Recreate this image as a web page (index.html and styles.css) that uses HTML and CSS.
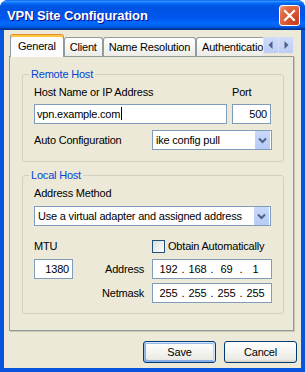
FILE: index.html
```html
<!DOCTYPE html>
<html lang="en">
<head>
    <meta charset="UTF-8">
    <title>VPN Site Configuration</title>
    <link rel="stylesheet" href="styles.css">
</head>
<body>
    <div class="window">
        <!-- Title Bar -->
        <div class="titlebar">
            <span class="title">VPN Site Configuration</span>
            <button class="close" aria-label="Close">
                <svg width="19" height="19" viewBox="0 0 19 19">
                    <path d="M5 5 L14 14 M14 5 L5 14" stroke="#ffffff" stroke-width="2.2" stroke-linecap="square" fill="none"/>
                </svg>
            </button>
        </div>

        <div class="client">
            <!-- Tabs -->
            <div class="tabbar">
                <div class="tabs">
                    <div class="tab active">General</div>
                    <div class="tab">Client</div>
                    <div class="tab">Name Resolution</div>
                    <div class="tab">Authentication</div>
                </div>
                <div class="tab-scroll">
                    <span class="arrow">
                        <svg width="14" height="16" viewBox="0 0 14 16"><polygon points="8.5,4 4.5,8 8.5,12" fill="#4d6185"/></svg>
                    </span>
                    <span class="arrow">
                        <svg width="14" height="16" viewBox="0 0 14 16"><polygon points="5.5,4 9.5,8 5.5,12" fill="#4d6185"/></svg>
                    </span>
                </div>
            </div>

            <!-- Tab Panel -->
            <div class="panel">
                <fieldset class="group">
                    <legend>Remote Host</legend>
                    <div class="remote-grid">
                        <span class="label">Host Name or IP Address</span>
                        <span class="label">Port</span>
                        <div class="field">vpn.example.com<span class="caret"></span></div>
                        <div class="field num">500</div>
                    </div>
                    <div class="row">
                        <span class="label">Auto Configuration</span>
                        <div class="combo short">
                            <span class="combo-text">ike config pull</span>
                            <span class="drop">
                                <svg width="15" height="18" viewBox="0 0 15 18"><polyline points="4,7.5 7.5,11 11,7.5" fill="none" stroke="#4d6185" stroke-width="2"/></svg>
                            </span>
                        </div>
                    </div>
                </fieldset>

                <fieldset class="group local">
                    <legend>Local Host</legend>
                    <span class="label">Address Method</span>
                    <div class="combo wide">
                        <span class="combo-text">Use a virtual adapter and assigned address</span>
                        <span class="drop">
                            <svg width="15" height="18" viewBox="0 0 15 18"><polyline points="4,7.5 7.5,11 11,7.5" fill="none" stroke="#4d6185" stroke-width="2"/></svg>
                        </span>
                    </div>
                    <div class="local-grid">
                        <span class="label">MTU</span>
                        <span></span>
                        <label class="check">
                            <span class="box"></span>
                            Obtain Automatically
                        </label>

                        <div class="field num">1380</div>
                        <span class="label right">Address</span>
                        <div class="field ip">
                            <span class="seg">192</span><span class="dot">.</span>
                            <span class="seg">168</span><span class="dot">.</span>
                            <span class="seg">69</span><span class="dot">.</span>
                            <span class="seg">1</span>
                        </div>

                        <span></span>
                        <span class="label right">Netmask</span>
                        <div class="field ip">
                            <span class="seg">255</span><span class="dot">.</span>
                            <span class="seg">255</span><span class="dot">.</span>
                            <span class="seg">255</span><span class="dot">.</span>
                            <span class="seg">255</span>
                        </div>
                    </div>
                </fieldset>
            </div>

            <!-- Dialog Buttons -->
            <div class="buttons">
                <button class="btn default">Save</button>
                <button class="btn">Cancel</button>
            </div>
        </div>
    </div>
</body>
</html>
```

FILE: styles.css
```css
/* Global Styles */
body {
    margin: 0;
    background-color: #ffffff;
    font-family: 'Liberation Sans', Arial, sans-serif;
    font-size: 11px;
    letter-spacing: -0.2px;
    color: #000000;
}

/* Window Frame */
.window {
    width: 305px;
    height: 372px;
    box-sizing: border-box;
    display: flex;
    flex-direction: column;
    background-color: #0855dd;
    border-radius: 8px 8px 0 0;
    overflow: hidden;
}

.titlebar {
    height: 30px;
    flex: none;
    display: flex;
    align-items: center;
    justify-content: space-between;
    padding: 0 5px 0 7px;
    background: linear-gradient(to bottom, #0058ee 0%, #3593ff 4%, #288eff 6%, #127dff 8%, #036ffc 10%, #0262ee 14%, #0057e5 20%, #0054e3 24%, #0055eb 56%, #005bf5 66%, #026afe 76%, #0062ef 86%, #0052d6 92%, #0040ab 94%, #003092 100%);
}

.title {
    color: #ffffff;
    font-size: 13px;
    font-weight: bold;
    letter-spacing: -0.1px;
    text-shadow: 1px 1px 0 #0f1089;
}

.close {
    width: 21px;
    height: 21px;
    padding: 0;
    display: flex;
    align-items: center;
    justify-content: center;
    border: 1px solid #ffffff;
    border-radius: 3px;
    background: radial-gradient(circle at 85% 85%, #c63b1a 0%, #dc5a32 50%, #e36c45 75%, #f2a489 100%);
}

.client {
    flex: 1;
    margin: 0 4px 4px 4px;
    padding-top: 4px;
    background-color: #ece9d8;
}

/* Tabs */
.tabbar {
    display: flex;
    height: 23px;
    margin: 0 0 -1px 6px;
    position: relative;
    z-index: 1;
}

.tabs {
    width: 253px;
    display: flex;
    align-items: flex-end;
    overflow: hidden;
}

.tab {
    flex: none;
    height: 19px;
    margin-bottom: 1px;
    padding: 0 5px;
    box-sizing: border-box;
    border: 1px solid #919b9c;
    border-bottom: none;
    border-radius: 3px 3px 0 0;
    line-height: 18px;
    white-space: nowrap;
    background: linear-gradient(to bottom, #ffffff 0%, #f7f7f4 50%, #ecebe6 100%);
}

.tab.active {
    height: 23px;
    margin-bottom: 0;
    padding: 0 7px;
    border-top: 1px solid #e68b2c;
    box-shadow: inset 0 2px 0 #ffc73c;
    background: #fcfcfe;
    line-height: 22px;
}

.tab-scroll {
    display: flex;
    height: 16px;
    margin-top: 3px;
}

.arrow {
    width: 15px;
    height: 16px;
    display: flex;
    align-items: center;
    justify-content: center;
    background: linear-gradient(to bottom, #cfdcfa, #bccdf5);
    border-left: 1px solid #d8e3fb;
    box-sizing: border-box;
}

/* Tab Panel */
.panel {
    height: 275px;
    box-sizing: border-box;
    margin: 0 7px 0 5px;
    padding: 11px 9px 0 12px;
    border: 1px solid #919b9c;
    box-shadow: 1px 1px 0 #c9c6b6;
    background-color: #ece9d8;
}

.group {
    margin: 0;
    padding: 0 11px 11px 11px;
    border: 1px solid #d0d0bf;
    border-radius: 3px;
    min-width: 0;
}

.group legend {
    padding: 0 2px;
    margin-left: -5px;
    line-height: 13px;
    color: #0046d5;
}

.group.local {
    margin-top: 7px;
    padding-bottom: 10px;
}

.label {
    display: block;
    line-height: 13px;
    white-space: nowrap;
}

.label.right {
    text-align: right;
}

.remote-grid {
    display: grid;
    grid-template-columns: 193px 39px;
    column-gap: 5px;
    row-gap: 5px;
    margin-top: 5px;
}

.row {
    display: flex;
    align-items: center;
    justify-content: space-between;
    margin-top: 6px;
}

/* Inputs */
.field {
    height: 20px;
    box-sizing: border-box;
    border: 1px solid #7f9db9;
    background-color: #ffffff;
    padding: 0 2px;
    line-height: 18px;
    white-space: nowrap;
}

.field.num {
    text-align: right;
    padding-right: 3px;
}

.caret {
    display: inline-block;
    width: 1px;
    height: 13px;
    margin-left: 1px;
    vertical-align: -2px;
    background-color: #000000;
}

.field.ip {
    display: flex;
    padding: 0 4px;
}

.ip .seg {
    flex: 1;
    text-align: center;
}

.ip .dot {
    width: 6px;
    text-align: center;
}

.combo {
    height: 20px;
    box-sizing: border-box;
    display: flex;
    align-items: center;
    justify-content: space-between;
    border: 1px solid #7f9db9;
    background-color: #ffffff;
    padding: 0 1px 0 3px;
}

.combo.short {
    width: 120px;
}

.combo.wide {
    width: 237px;
    margin-top: 6px;
}

.drop {
    width: 15px;
    height: 18px;
    display: flex;
    border-radius: 1px;
    background: linear-gradient(to bottom, #c9d7fa, #b7cbf6);
}

.local > .label {
    margin-top: 5px;
}

.local-grid {
    display: grid;
    grid-template-columns: 39px 1fr 120px;
    grid-template-rows: 15px 20px 20px;
    column-gap: 8px;
    row-gap: 4px;
    align-items: center;
    margin-top: 14px;
}

.local-grid > :nth-child(-n+3) {
    align-self: start;
}

.check {
    display: flex;
    align-items: center;
    gap: 3px;
    white-space: nowrap;
    line-height: 13px;
}

.box {
    width: 13px;
    height: 13px;
    box-sizing: border-box;
    border: 1px solid #1c5180;
    background: linear-gradient(135deg, #dcdcd7, #ffffff);
}

/* Dialog Buttons */
.buttons {
    display: flex;
    justify-content: flex-end;
    gap: 8px;
    margin: 10px 4px 0 0;
}

.btn {
    width: 73px;
    height: 22px;
    padding: 0;
    border: 1px solid #003c74;
    border-radius: 3px;
    font-family: 'Liberation Sans', Arial, sans-serif;
    font-size: 11px;
    letter-spacing: -0.2px;
    color: #000000;
    background: linear-gradient(to bottom, #ffffff 0%, #f4f4f0 50%, #ecebe6 86%, #d6d0c5 100%);
}

.btn.default {
    box-shadow: inset -1px 1px #cee7ff, inset 1px 2px #98b8ea, inset -2px 2px #bcd4f6, inset 1px -1px #89ade4, inset 2px -2px #89ade4;
}
```
